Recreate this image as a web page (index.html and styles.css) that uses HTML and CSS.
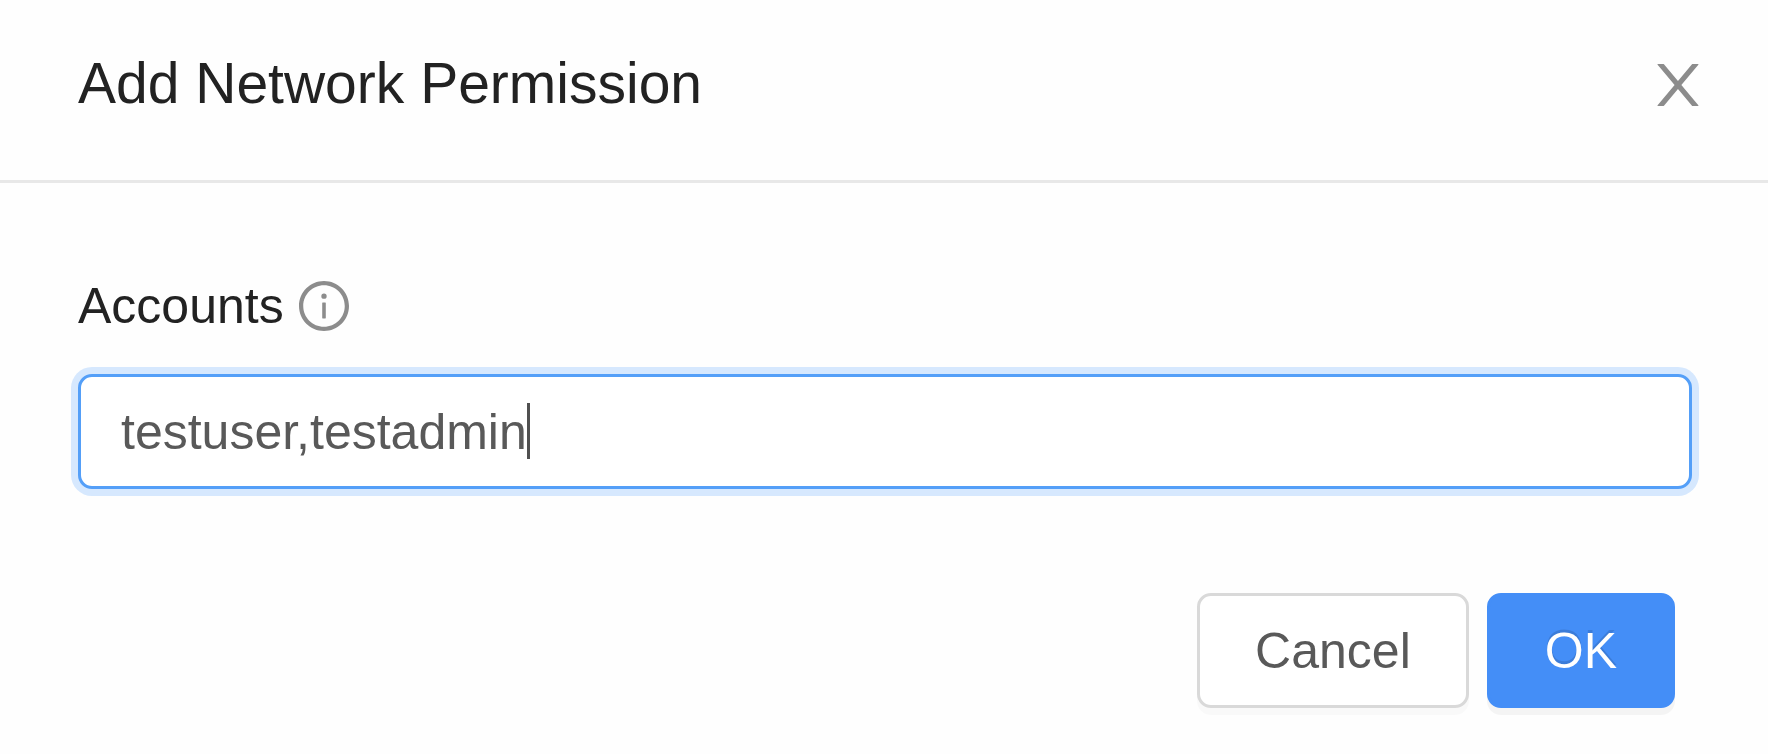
FILE: index.html
```html
<!doctype html>
<html lang="en">
<head>
	<meta charset="UTF-8">
	<title>Add Network Permission</title>
	<link rel="stylesheet" href="styles.css">
</head>
<body>
	<form class="modal">
		<header class="modal__header">
			<h1 class="modal__title">Add Network Permission</h1>
			<button type="button" class="modal__close" aria-label="Close">
				<svg class="icon icon--close" viewBox="64 64 896 896" aria-hidden="true">
					<path d="M563.8 512l262.5-312.9c4.4-5.2.7-13.1-6.1-13.1h-79.8c-4.7 0-9.2 2.1-12.3 5.7L511.6 449.8 295.1 191.7c-3-3.6-7.5-5.7-12.3-5.7H203c-6.8 0-10.5 7.9-6.1 13.1L459.4 512 196.9 824.9A7.95 7.95 0 0 0 203 838h79.8c4.7 0 9.2-2.1 12.3-5.7l216.5-258.1 216.5 258.1c3 3.6 7.5 5.7 12.3 5.7h79.8c6.8 0 10.5-7.9 6.1-13.1L563.8 512z"/>
				</svg>
			</button>
		</header>
		<div class="modal__body">
			<div class="field__label">
				<label for="accounts">Accounts</label>
				<svg class="icon icon--info" viewBox="64 64 896 896" aria-hidden="true">
					<path d="M512 64C264.6 64 64 264.6 64 512s200.6 448 448 448 448-200.6 448-448S759.4 64 512 64zm0 820c-205.4 0-372-166.6-372-372s166.6-372 372-372 372 166.6 372 372-166.6 372-372 372z"/>
					<path d="M464 336a48 48 0 1 0 96 0 48 48 0 1 0-96 0zm72 112h-48c-4.4 0-8 3.6-8 8v272c0 4.4 3.6 8 8 8h48c4.4 0 8-3.6 8-8V456c0-4.4-3.6-8-8-8z"/>
				</svg>
			</div>
			<div class="field__control">
				<input id="accounts" class="field__input" type="text" value="testuser,testadmin" autocomplete="off" spellcheck="false">
				<span class="field__caret"></span>
			</div>
		</div>
		<footer class="modal__footer">
			<button type="button" class="btn">Cancel</button>
			<button type="submit" class="btn btn--primary">OK</button>
		</footer>
	</form>
</body>
</html>
```
FILE: styles.css
```css
*,*:before,*:after{box-sizing:border-box;margin:0;padding:0}
body{background-color:#fefefe;color:#222;font-family:"Liberation Sans",Arial,sans-serif;font-size:50px;line-height:56px}
button,input{font:inherit}

.icon{display:block;fill:#8c8c8c}
.icon--close{width:58px;height:58px}
.icon--info{width:50px;height:50px}

.modal__header{display:flex;align-items:center;justify-content:space-between;padding:43px 61px 57px 78px;border-bottom:3px solid #e8e8e8}
.modal__title{font-size:57px;font-weight:400;line-height:80px}
.modal__close{padding-top:4px;background-color:transparent;border:0;cursor:pointer}

.modal__body{padding:95px 76px 0 78px}
.field__label{display:flex;align-items:center;gap:15px;margin-bottom:40px}
.field__control{position:relative}
.field__input{display:block;width:100%;height:115px;padding:0 40px;color:#595959;background-color:#fff;border:3px solid #549ff8;border-radius:14px;outline:0;
box-shadow:0 0 0 7px #d6e8fe;caret-color:transparent}
/* text cursor after the last character */
.field__caret{position:absolute;left:449px;top:29px;width:3px;height:56px;background-color:#505050}

.modal__footer{display:flex;justify-content:flex-end;gap:18px;padding:104px 93px 46px}
.btn{height:115px;padding:0 55px;color:#595959;background-color:#fff;border:3px solid #d9d9d9;border-radius:14px;box-shadow:0 7px 0 rgba(0,0,0,0.02);cursor:pointer}
.btn--primary{color:#fff;background-color:#448ef7;border-color:#448ef7;text-shadow:0 -3px 0 rgba(0,0,0,0.12);box-shadow:0 7px 0 rgba(0,0,0,0.04)}
```
